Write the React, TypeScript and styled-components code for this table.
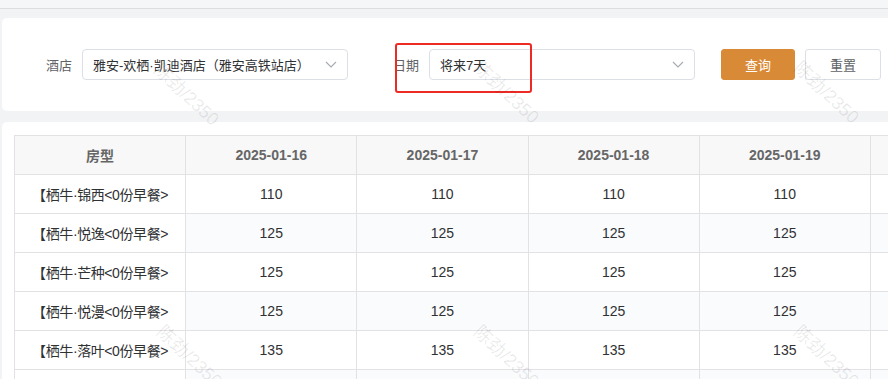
import React from 'react';
import styled, { createGlobalStyle } from 'styled-components';

const GlobalStyle = createGlobalStyle`
  html, body {
    margin: 0;
    padding: 0;
    background: #f2f3f5;
    font-family: "Liberation Sans", "Noto Sans CJK SC", sans-serif;
    overflow: hidden;
  }
`;

const Page = styled.div`
  position: relative;
  width: 888px;
  height: 379px;
  overflow: hidden;
  background: #f2f3f5;
`;

const TopBar = styled.div`
  height: 8px;
  background: #f5f6f8;
  border-bottom: 1px solid #dcdde1;
`;

const Content = styled.div`
  display: flex;
  flex-direction: column;
  gap: 11px;
  padding: 9px 0 0 2px;
`;

const Card = styled.div<{ $pad: string }>`
  background: #ffffff;
  border-radius: 5px;
  padding: ${p => p.$pad};
  width: 900px;
  box-sizing: border-box;
`;

const FormRow = styled.div`
  display: flex;
  align-items: center;
  height: 31px;
`;

const Field = styled.div<{ $mr: number }>`
  position: relative;
  display: flex;
  align-items: center;
  gap: 10px;
  margin-right: ${p => p.$mr}px;
`;

const Label = styled.span`
  font-size: 13px;
  color: #606266;
  white-space: nowrap;
`;

const Select = styled.div`
  width: 266px;
  height: 31px;
  box-sizing: border-box;
  border: 1px solid #dcdfe6;
  border-radius: 4px;
  display: flex;
  align-items: center;
  justify-content: space-between;
  padding: 0 10px 0 10px;
  font-size: 13px;
  color: #303133;
  background: #fff;
`;

const RedBox = styled.div`
  position: absolute;
  left: 2px;
  top: -6px;
  width: 137px;
  height: 50px;
  box-sizing: border-box;
  border: 2px solid #ee2a24;
  border-radius: 3px;
  pointer-events: none;
`;

const Button = styled.button<{ $primary?: boolean }>`
  height: 31px;
  width: ${p => (p.$primary ? 74 : 76)}px;
  margin-right: 10px;
  padding: 0;
  border-radius: 3px;
  font-family: inherit;
  font-size: 13px;
  cursor: pointer;
  border: 1px solid ${p => (p.$primary ? '#d98a36' : '#dcdfe6')};
  background: ${p => (p.$primary ? '#d98a36' : '#fff')};
  color: ${p => (p.$primary ? '#fff' : '#606266')};
`;

const Table = styled.table`
  border-collapse: collapse;
  table-layout: fixed;
  width: ${171.3 * 8}px;
  font-size: 14px;
`;

const Th = styled.th`
  height: 38px;
  padding: 0;
  background: #f8f8f9;
  border: 1px solid #e2e2e4;
  color: #666;
  font-weight: bold;
  text-align: center;
`;

const Td = styled.td<{ $stripe?: boolean; $fixed?: boolean }>`
  height: 38px;
  padding: 0;
  border: 1px solid #e2e2e4;
  color: #303133;
  text-align: center;
  white-space: nowrap;
  letter-spacing: ${p => (p.$fixed ? '-0.4px' : '0')};
  background: ${p => (p.$stripe && !p.$fixed ? '#fafbfd' : '#fff')};
`;

const Watermark = styled.span`
  position: absolute;
  font-size: 18px;
  color: rgba(0, 0, 0, 0.09);
  transform: rotate(43deg);
  transform-origin: left top;
  white-space: nowrap;
  pointer-events: none;
`;

const Chevron = () => (
  <svg width="12" height="7" viewBox="0 0 12 7">
    <path d="M1 1 L6 6 L11 1" fill="none" stroke="#a8abb2" strokeWidth="1.2" />
  </svg>
);

const dates = ['2025-01-16', '2025-01-17', '2025-01-18', '2025-01-19', '2025-01-20', '2025-01-21', '2025-01-22'];
const rooms = [
  { name: '【栖牛·锦西<0份早餐>', price: 110 },
  { name: '【栖牛·悦逸<0份早餐>', price: 125 },
  { name: '【栖牛·芒种<0份早餐>', price: 125 },
  { name: '【栖牛·悦漫<0份早餐>', price: 125 },
  { name: '【栖牛·落叶<0份早餐>', price: 135 },
  { name: '【栖牛·悦居<0份早餐>', price: 135 },
];

const marks = [
  [167, 56], [487, 54], [807, 54],
  [170, 318], [487, 318], [807, 318],
];

export default function App() {
  return (
    <Page>
      <GlobalStyle />
      <TopBar />
      <Content>
        <Card $pad="31px 0 31px 44px">
          <FormRow>
            <Field $mr={45}>
              <Label>酒店</Label>
              <Select>
                <span>雅安-欢栖·凯迪酒店（雅安高铁站店）</span>
                <Chevron />
              </Select>
            </Field>
            <Field $mr={26}>
              <Label>日期</Label>
              <Select>
                <span>将来7天</span>
                <Chevron />
              </Select>
              <RedBox />
            </Field>
            <Button $primary>查询</Button>
            <Button>重置</Button>
          </FormRow>
        </Card>
        <Card $pad="13px 0 0 12px">
          <Table>
            <thead>
              <tr>
                <Th>房型</Th>
                {dates.map(d => <Th key={d}>{d}</Th>)}
              </tr>
            </thead>
            <tbody>
              {rooms.map((r, i) => (
                <tr key={r.name}>
                  <Td $fixed>{r.name}</Td>
                  {dates.map(d => (
                    <Td key={d} $stripe={i % 2 === 1}>{r.price}</Td>
                  ))}
                </tr>
              ))}
            </tbody>
          </Table>
        </Card>
      </Content>
      {marks.map(([x, y]) => (
        <Watermark key={`${x}-${y}`} style={{ left: x, top: y }}>陈劲/2350</Watermark>
      ))}
    </Page>
  );
}
